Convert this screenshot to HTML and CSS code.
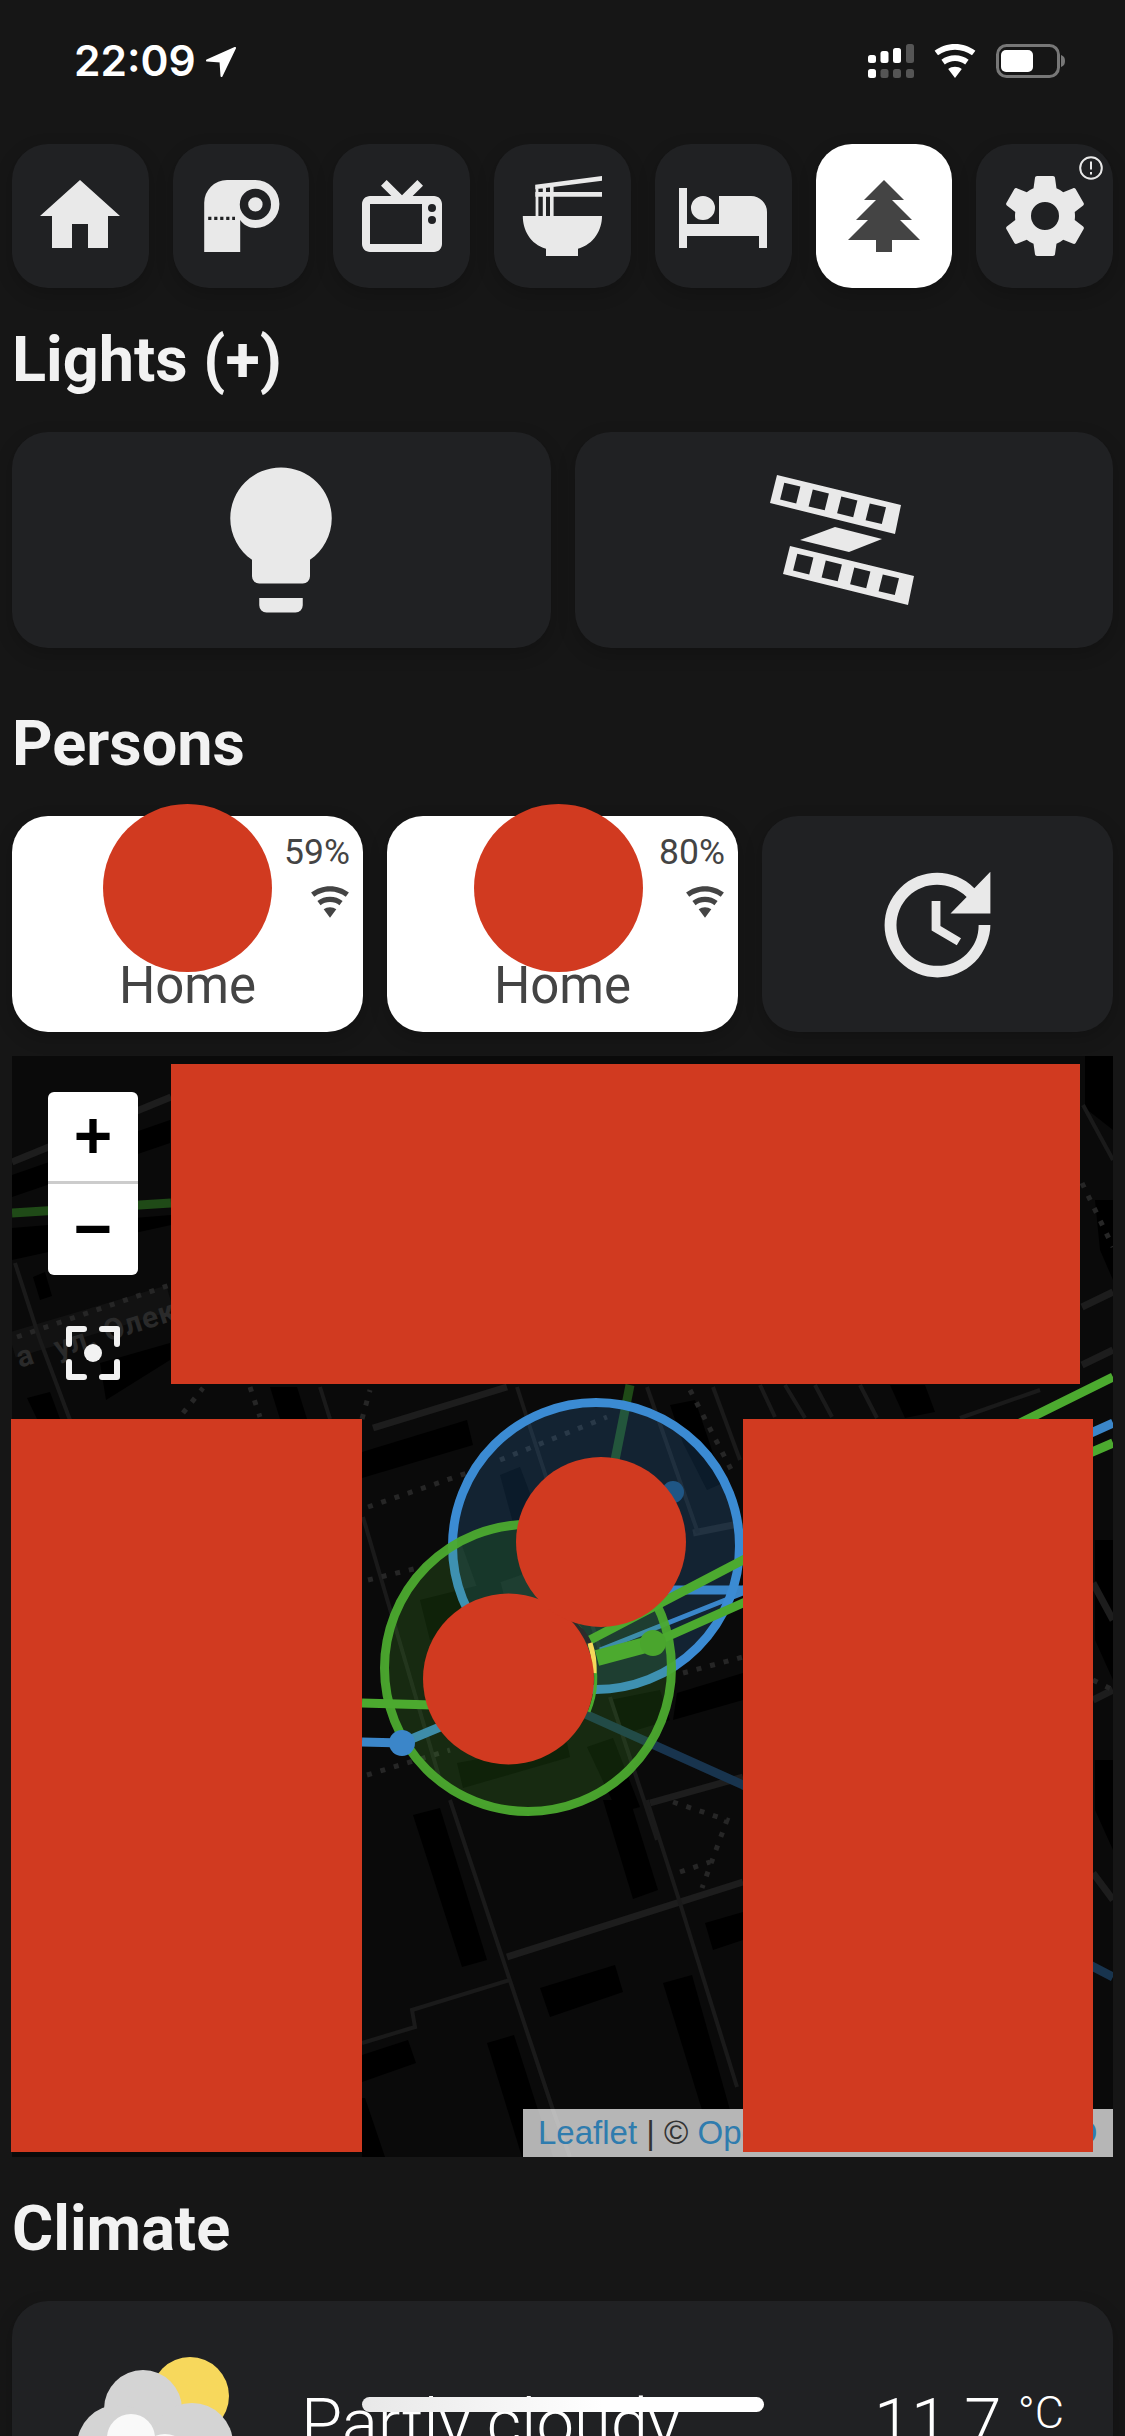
FILE: index.html
```html
<!DOCTYPE html>
<html>
<head>
    <title>Home Assistant</title>
    <link rel="stylesheet" href="styles.css">
</head>
<body>
    <header class="status-bar">
        <span class="time">22:09</span>
        <svg class="location" viewBox="0 0 30 30"><path d="M29,1L1,13.5L14.5,14.5L15.5,29Z"/></svg>
        <div class="status-right">
            <svg class="signal" viewBox="0 0 46 34">
                <rect class="on" x="0" y="11" width="8" height="8" rx="2.5"/>
                <rect class="on" x="12.5" y="7" width="8" height="12" rx="2.5"/>
                <rect class="on" x="25" y="4" width="8" height="15" rx="2.5"/>
                <rect class="off" x="38" y="0" width="8" height="19" rx="2.5"/>
                <rect class="on" x="0" y="25" width="8" height="9" rx="2.5"/>
                <rect class="off" x="12.5" y="25" width="8" height="9" rx="2.5"/>
                <rect class="off" x="25" y="25" width="8" height="9" rx="2.5"/>
                <rect class="off" x="38" y="25" width="8" height="9" rx="2.5"/>
            </svg>
            <svg class="status-wifi" viewBox="1.2 3 21.6 18"><path d="M12,21L15.6,16.2C14.6,15.45 13.35,15 12,15C10.65,15 9.4,15.45 8.4,16.2L12,21M12,3C7.95,3 4.21,4.34 1.2,6.6L3,9C5.5,7.12 8.62,6 12,6C15.38,6 18.5,7.12 21,9L22.8,6.6C19.79,4.34 16.05,3 12,3M12,9C9.3,9 6.81,9.89 4.8,11.4L6.6,13.8C8.1,12.67 9.97,12 12,12C14.03,12 15.9,12.67 17.4,13.8L19.2,11.4C17.19,9.89 14.7,9 12,9Z"/></svg>
            <svg class="battery" viewBox="0 0 70 34">
                <rect class="battery-case" x="1.5" y="1.5" width="61" height="31" rx="9"/>
                <rect class="battery-level" x="5" y="6" width="32" height="22" rx="5"/>
                <path class="battery-nub" d="M65,11C68,12 69,14 69,17C69,20 68,22 65,23Z"/>
            </svg>
        </div>
    </header>

    <main class="page">
        <nav class="tabs">
            <div class="tab">
                <svg class="icon-tab" viewBox="0 0 24 24"><path d="M10,20V14H14V20H19V12H22L12,3L2,12H5V20H10Z"/></svg>
            </div>
            <div class="tab">
                <svg class="icon-tab" viewBox="0 0 24 24">
                    <path fill-rule="evenodd" d="M8.5,3H15.6A6,6 0 0 1 15.6,15C14,15 12.6,14.2 11.8,13V21H2.8V8.7A5.7,5.7 0 0 1 8.5,3ZM15.6,5.2A3.9,3.9 0 1 0 15.6,13A3.9,3.9 0 1 0 15.6,5.2ZM15.6,7.3A1.8,1.8 0 1 1 15.6,10.9A1.8,1.8 0 1 1 15.6,7.3Z"/>
                    <path class="tab-dots" d="M3.8,12.6H10.5"/>
                </svg>
            </div>
            <div class="tab">
                <svg class="icon-tab" viewBox="0 0 24 24"><path d="M8.16,3L6.75,4.41L9.34,7H4C2.89,7 2,7.89 2,9V19C2,20.11 2.89,21 4,21H20C21.11,21 22,20.11 22,19V9C22,7.89 21.11,7 20,7H14.66L17.25,4.41L15.84,3L12,6.84L8.16,3M4,9H17V19H4V9M19.5,9A1,1 0 0,1 20.5,10A1,1 0 0,1 19.5,11A1,1 0 0,1 18.5,10A1,1 0 0,1 19.5,9M19.5,12A1,1 0 0,1 20.5,13A1,1 0 0,1 19.5,14A1,1 0 0,1 18.5,13A1,1 0 0,1 19.5,12Z"/></svg>
            </div>
            <div class="tab">
                <svg class="icon-tab" viewBox="0 0 24 24"><path d="M5.3,4.2L22,2V3.2L5.3,5.3ZM5.3,6H22V7.2H5.3ZM5.4,4.5H6.1V12H5.4ZM7.2,4.5H8V12H7.2ZM9,4.5H9.9V12H9ZM2.2,12H22C22,15.5 20,19 16,20.2V22H8V20.2C4,19 2.2,15.5 2.2,12Z"/></svg>
            </div>
            <div class="tab">
                <svg class="icon-tab" viewBox="0 0 24 24"><path d="M19,7H11V14H3V5H1V20H3V17H21V20H23V11A4,4 0 0,0 19,7M7,13A3,3 0 0,0 10,10A3,3 0 0,0 7,7A3,3 0 0,0 4,10A3,3 0 0,0 7,13Z"/></svg>
            </div>
            <div class="tab tab-active">
                <svg class="icon-tab" viewBox="0 0 24 24"><path d="M10,21V18H3L8,13H5L10,8H7L12,3L17,8H14L19,13H16L21,18H14V21H10Z"/></svg>
            </div>
            <div class="tab">
                <svg class="icon-tab" viewBox="0 0 24 24"><path d="M12,15.5A3.5,3.5 0 0,1 8.5,12A3.5,3.5 0 0,1 12,8.5A3.5,3.5 0 0,1 15.5,12A3.5,3.5 0 0,1 12,15.5M19.43,12.97C19.47,12.65 19.5,12.33 19.5,12C19.5,11.67 19.47,11.34 19.43,11L21.54,9.37C21.73,9.22 21.78,8.95 21.66,8.73L19.66,5.27C19.54,5.05 19.27,4.96 19.05,5.05L16.56,6.05C16.04,5.66 15.5,5.32 14.87,5.07L14.5,2.42C14.46,2.18 14.25,2 14,2H10C9.75,2 9.54,2.18 9.5,2.42L9.13,5.07C8.5,5.32 7.96,5.66 7.44,6.05L4.95,5.05C4.73,4.96 4.46,5.05 4.34,5.27L2.34,8.73C2.21,8.95 2.27,9.22 2.46,9.37L4.57,11C4.53,11.34 4.5,11.67 4.5,12C4.5,12.33 4.53,12.65 4.57,12.97L2.46,14.63C2.27,14.78 2.21,15.05 2.34,15.27L4.34,18.73C4.46,18.95 4.73,19.03 4.95,18.95L7.44,17.94C7.96,18.34 8.5,18.68 9.13,18.93L9.5,21.58C9.54,21.82 9.75,22 10,22H14C14.25,22 14.46,21.82 14.5,21.58L14.87,18.93C15.5,18.67 16.04,18.34 16.56,17.94L19.05,18.95C19.27,19.03 19.54,18.95 19.66,18.73L21.66,15.27C21.78,15.05 21.73,14.78 21.54,14.63L19.43,12.97Z"/></svg>
                <svg class="tab-badge" viewBox="0 0 24 24"><circle cx="12" cy="12" r="10.8"/><path d="M12,5.5V13.5M12,16V18.5"/></svg>
            </div>
        </nav>

        <h2 class="section-title">Lights (+)</h2>
        <div class="row-two">
            <div class="card">
                <svg class="icon-bulb" viewBox="0 0 24 24"><path d="M12,2A7,7 0 0,0 5,9C5,11.38 6.19,13.47 8,14.74V17A1,1 0 0,0 9,18H15A1,1 0 0,0 16,17V14.74C17.81,13.47 19,11.38 19,9A7,7 0 0,0 12,2M9,21A1,1 0 0,0 10,22H14A1,1 0 0,0 15,21V20H9V21Z"/></svg>
            </div>
            <div class="card">
                <svg class="icon-scene" viewBox="760 465 170 150">
                    <defs>
                        <path id="strip" fill-rule="evenodd" d="M778,475L902,505L896,534L771,503ZM785.3,482.7L781.1,499.5L797.2,503.4L801.4,486.6ZM813.8,489.6L809.6,506.4L825.7,510.3L829.9,493.5ZM842.3,496.5L838.1,513.3L854.2,517.2L858.4,500.4ZM870.8,503.4L866.6,520.2L882.8,524.1L887,507.3Z"/>
                    </defs>
                    <use href="#strip"/>
                    <path d="M836,527L883,539L850,552L801,540Z"/>
                    <use href="#strip" transform="translate(13 71)"/>
                </svg>
            </div>
        </div>

        <h2 class="section-title section-gap">Persons</h2>
        <div class="row-three">
            <div class="card person">
                <div class="avatar"></div>
                <div class="person-stats">
                    <span>59%</span>
                    <svg class="icon-wifi" viewBox="0 0 24 24"><path d="M12,21L15.6,16.2C14.6,15.45 13.35,15 12,15C10.65,15 9.4,15.45 8.4,16.2L12,21M12,3C7.95,3 4.21,4.34 1.2,6.6L3,9C5.5,7.12 8.62,6 12,6C15.38,6 18.5,7.12 21,9L22.8,6.6C19.79,4.34 16.05,3 12,3M12,9C9.3,9 6.81,9.89 4.8,11.4L6.6,13.8C8.1,12.67 9.97,12 12,12C14.03,12 15.9,12.67 17.4,13.8L19.2,11.4C17.19,9.89 14.7,9 12,9Z"/></svg>
                </div>
                <div class="person-state">Home</div>
            </div>
            <div class="card person">
                <div class="avatar avatar-off"></div>
                <div class="person-stats">
                    <span>80%</span>
                    <svg class="icon-wifi" viewBox="0 0 24 24"><path d="M12,21L15.6,16.2C14.6,15.45 13.35,15 12,15C10.65,15 9.4,15.45 8.4,16.2L12,21M12,3C7.95,3 4.21,4.34 1.2,6.6L3,9C5.5,7.12 8.62,6 12,6C15.38,6 18.5,7.12 21,9L22.8,6.6C19.79,4.34 16.05,3 12,3M12,9C9.3,9 6.81,9.89 4.8,11.4L6.6,13.8C8.1,12.67 9.97,12 12,12C14.03,12 15.9,12.67 17.4,13.8L19.2,11.4C17.19,9.89 14.7,9 12,9Z"/></svg>
                </div>
                <div class="person-state">Home</div>
            </div>
            <div class="card">
                <svg class="icon-update" viewBox="0 0 24 24"><path d="M21,10.12H14.22L16.96,7.3C14.23,4.6 9.81,4.5 7.08,7.2C4.35,9.91 4.35,14.28 7.08,17C9.81,19.7 14.23,19.7 16.96,17C18.32,15.65 19,14.08 19,12.1H21C21,14.08 20.12,16.65 18.36,18.39C14.85,21.87 9.15,21.87 5.64,18.39C2.14,14.92 2.11,9.28 5.62,5.81C9.13,2.34 14.76,2.34 18.27,5.81L21,3V10.12M12.5,8V12.25L16,14.33L15.28,15.54L11,13V8H12.5Z"/></svg>
            </div>
        </div>

        <div class="map">
            <!-- map drawn in page coordinates, so the viewBox starts at the map's corner -->
            <svg class="map-layer" viewBox="12 1056 1101 1101">
                <!-- buildings -->
                <path class="bld" d="M12,1175L170,1120V1143L12,1197ZM12,1228L171,1215V1225L12,1260ZM33,1277L45,1272L52,1296L40,1300ZM100,1363L170,1343V1360L106,1400ZM27,1398L50,1392L60,1419H37Z"/>
                <path class="bld" d="M270,1387H297L307,1419H280ZM890,1385H925L935,1412L905,1418ZM1085,1056H1113V1130L1085,1108Z"/>
                <path class="bld" d="M362,1452L467,1420L473,1445L362,1478ZM500,1475L520,1467L540,1520L515,1530ZM683,1443L707,1490L723,1483L695,1400L670,1405Z"/>
                <path class="bld" d="M677,1693L743,1673V1700L673,1720ZM587,1747L613,1738L640,1807L618,1813ZM457,1763L567,1743L570,1757L463,1788Z"/>
                <path class="bld" d="M413,1815L440,1808L487,1960L462,1967ZM603,1800H630L658,1890L633,1899ZM540,1988L615,1965L623,1992L550,2017ZM663,1983L692,1975L730,2110H702Z"/>
                <path class="bld" d="M487,2043L514,2035L553,2157H522ZM362,2055L408,2040L416,2063L362,2082ZM705,1923L743,1912V1940L713,1950ZM362,2098H365L385,2157H362Z"/>
                <path class="bld" d="M460,1540L520,1520L535,1570L478,1590ZM420,1600L500,1580L510,1620L430,1640ZM610,1700L660,1690L670,1720L620,1735Z"/>
                <path class="bld" d="M1095,1540H1113V1680L1095,1640ZM1095,1760H1113V1850L1095,1810ZM1095,1200H1113V1280L1100,1250Z"/>

                <!-- streets -->
                <g class="road">
                    <path d="M12,1162L171,1097"/>
                    <path d="M507,1387L373,1428"/>
                    <path d="M12,1345L170,1298" class="road-wide"/>
                    <path d="M1082,1307L1113,1292M1082,1365L1113,1350"/>
                    <path d="M693,1533L743,1523M650,1803L743,1777M507,1957L743,1882"/>
                    <path d="M1093,1583L1113,1620M1093,1873L1113,1900M1093,1700L1113,1690"/>
                </g>
                <g class="road-thin">
                    <path d="M15,1263L40,1340L70,1420"/>
                    <path d="M363,1517L407,1667L440,1780"/>
                    <path d="M517,1387L547,1480L600,1650"/>
                    <path d="M647,1387L698,1533"/>
                    <path d="M713,1387L740,1460"/>
                    <path d="M610,1697L657,1840"/>
                    <path d="M450,1800L553,2110L570,2157"/>
                    <path d="M647,1800L680,1903L737,2087"/>
                    <path d="M362,2043L415,2027L412,2010L510,1980"/>
                    <path d="M320,1387L330,1419M760,1385L775,1417M785,1385L805,1418M815,1385L832,1417M860,1385L877,1418"/>
                    <path d="M960,1418L1040,1390"/>
                    <path d="M1083,1105L1113,1160"/>
                </g>
                <g class="dots">
                    <path d="M17,1337L170,1285"/>
                    <path d="M183,1413L203,1388M250,1387L260,1417M362,1419L370,1390"/>
                    <path d="M368,1507L467,1473M500,1460L607,1417M690,1390L735,1477"/>
                    <path d="M683,1673L743,1657M367,1775L450,1750M368,1580L430,1565"/>
                    <path d="M673,1802L727,1820L702,1888M680,1872L710,1862"/>
                    <path d="M1082,1183L1113,1247M1093,1680L1113,1690"/>
                </g>
                <text class="map-label" transform="translate(20 1368) rotate(-18)">а</text>
                <text class="map-label" transform="translate(58 1358) rotate(-18)">ул. Олек</text>

                <!-- routes and zones -->
                <path class="route-dim-green" d="M12,1213L171,1203"/>
                <path class="route-dim-green" d="M630,1385L615,1460"/>
                <path class="route-dim-blue" d="M583,1713L743,1785L1113,1977"/>
                <circle class="dot-dim" cx="673" cy="1492" r="11"/>
                <path class="route-blue" d="M663,1590H743L1113,1423"/>
                <path class="route-blue route-thin" d="M600,1650L743,1593"/>
                <path class="route-blue" d="M362,1742L402,1743L440,1727"/>
                <circle class="zone-blue" cx="596" cy="1546" r="143.5"/>
                <circle class="zone-green" cx="528" cy="1668" r="143.5"/>
                <path class="route-green" d="M590,1640L743,1560L1113,1377"/>
                <path class="route-green" d="M362,1703L433,1705"/>
                <path class="route-green route-fat" d="M597,1658L653,1643"/>
                <path class="route-green" d="M653,1643L743,1603L1113,1443"/>
                <circle class="dot-green" cx="653" cy="1643" r="13"/>
                <circle class="dot-blue" cx="402" cy="1743" r="13"/>

                <!-- markers -->
                <path class="marker-rim" d="M559,1607A88,88 0 0 1 589,1712"/>
                <path class="marker-dark" d="M568,1618Q585,1632 590,1645"/>
                <path class="marker-sun" d="M590,1643Q595,1658 594,1673"/>
                <circle class="redact-dot" cx="508.5" cy="1679" r="85.5"/>
                <circle class="redact-dot" cx="601" cy="1542" r="85"/>
            </svg>

            <div class="zoom-ctrl">
                <div class="zoom-btn zoom-in">+</div>
                <div class="zoom-btn">−</div>
            </div>
            <svg class="locate" viewBox="0 0 54 54">
                <path d="M3,18V3H18M36,3H51V18M51,36V51H36M18,51H3V36"/>
                <circle cx="27" cy="27" r="9"/>
            </svg>
            <div class="attribution"><a>Leaflet</a> | © <a>OpenStreetMap</a> © <a class="attr-last">CARTO</a></div>

            <div class="redact redact-top"></div>
            <div class="redact redact-left"></div>
            <div class="redact redact-right"></div>
        </div>

        <h2 class="section-title">Climate</h2>
        <div class="card weather">
            <svg class="weather-icon" viewBox="75 2357 160 130">
                <circle class="sun" cx="190" cy="2396" r="39"/>
                <circle class="cloud" cx="143" cy="2409" r="39"/>
                <circle class="cloud" cx="118" cy="2446" r="41"/>
                <circle class="cloud" cx="192" cy="2444" r="41"/>
                <circle class="cloud-front" cx="131" cy="2438" r="24"/>
                <circle class="cloud-front" cx="165" cy="2458" r="24"/>
            </svg>
            <div class="weather-state">Partly cloudy</div>
            <div class="weather-temp">11.7 <span class="weather-unit">°C</span></div>
        </div>
    </main>

    <div class="home-indicator"></div>
</body>
</html>
```

FILE: styles.css
```css
html, body {
    height: 2436px;
    overflow: hidden;
}

body {
    margin: 0;
    background-color: #161616;
    font-family: Roboto, "Noto Sans", sans-serif;
    position: relative;
}

/* status bar */
.status-bar {
    height: 144px;
    box-sizing: border-box;
    padding: 44px 59px 0 74px;
    display: flex;
    align-items: flex-start;
    color: #fff;
}

.time {
    font-family: Inter, sans-serif;
    font-size: 42.5px;
    font-weight: 600;
    line-height: 34px;
}

.location {
    width: 30px;
    height: 30px;
    margin: 3px 0 0 10px;
    fill: #fff;
    stroke: #fff;
    stroke-width: 2;
    stroke-linejoin: round;
}

.status-right {
    margin-left: auto;
    display: flex;
    gap: 20px;
}

.signal {
    width: 46px;
    height: 34px;
}

.signal .on {
    fill: #fff;
}

.signal .off {
    fill: #555;
}

.status-wifi {
    width: 42px;
    height: 34px;
    fill: #fff;
}

.battery {
    width: 70px;
    height: 34px;
}

.battery-case {
    fill: none;
    stroke: #777;
    stroke-width: 3;
}

.battery-level {
    fill: #fff;
}

.battery-nub {
    fill: #777;
}

.page {
    padding: 0 12px;
}

/* tabs */
.tabs {
    display: grid;
    grid-template-columns: repeat(7, 1fr);
    gap: 24px;
}

.tab {
    height: 144px;
    position: relative;
    display: flex;
    align-items: center;
    justify-content: center;
    background-color: #202123;
    border-radius: 36px;
    box-shadow: 0 6px 18px rgba(0, 0, 0, 0.2);
}

.tab-active {
    background-color: #fff;
}

.icon-tab {
    width: 96px;
    height: 96px;
    fill: #e9e9e9;
}

.tab-active .icon-tab {
    fill: #444;
}

.tab-dots {
    fill: none;
    stroke: #202123;
    stroke-width: 0.8;
    stroke-dasharray: 0.8 0.7;
}

.tab-badge {
    position: absolute;
    top: 12px;
    right: 10px;
    width: 24px;
    height: 24px;
    fill: none;
    stroke: #e9e9e9;
    stroke-width: 2;
}

.section-title {
    margin: 0;
    padding: 40px 0 41px 0;
    font-size: 63px;
    font-weight: 700;
    line-height: 63px;
    color: #f2f2f2;
}

.section-gap {
    margin-top: 24px;
}

.card {
    display: flex;
    align-items: center;
    justify-content: center;
    background-color: #202123;
    border-radius: 36px;
    box-shadow: 0 6px 18px rgba(0, 0, 0, 0.2);
}

.row-two {
    height: 216px;
    display: grid;
    grid-template-columns: 1fr 1fr;
    gap: 24px;
}

.row-three {
    height: 216px;
    display: grid;
    grid-template-columns: 1fr 1fr 1fr;
    gap: 24px;
}

.icon-bulb {
    width: 174px;
    height: 174px;
    fill: #e9e9e9;
}

.icon-scene {
    width: 170px;
    height: 150px;
    fill: #e9e9e9;
}

.icon-update {
    width: 141px;
    height: 141px;
    fill: #e9e9e9;
}

/* persons */
.person {
    position: relative;
    flex-direction: column;
    justify-content: flex-start;
    background-color: #fff;
    color: #444;
}

.avatar {
    width: 169px;
    height: 168px;
    margin-top: -12px;
    background-color: #d13a20;
    border-radius: 50%;
}

.avatar-off {
    margin-right: 9px;
}

.person-state {
    margin-top: -12px;
    font-size: 51px;
    line-height: 51px;
    position: relative;
}

.person-stats {
    position: absolute;
    top: 19px;
    right: 13px;
    display: flex;
    flex-direction: column;
    align-items: flex-end;
    gap: 12px;
    font-size: 35.5px;
    line-height: 34px;
}

.icon-wifi {
    width: 42px;
    height: 42px;
    margin-right: -1px;
    fill: #444;
}

/* map */
.map {
    height: 1101px;
    margin-top: 24px;
    position: relative;
    background-color: #0a0a0a;
}

.map-layer {
    position: absolute;
    top: 0;
    left: 0;
    width: 1101px;
    height: 1101px;
}

.map-layer path,
.locate path {
    fill: none;
}

.map-layer .bld {
    fill: #000;
}

.road path {
    stroke: #1d1d1d;
    stroke-width: 7;
}

.road .road-wide {
    stroke: #121212;
    stroke-width: 26;
}

.road-thin path {
    stroke: #1a1a1a;
    stroke-width: 4;
}

.dots path {
    stroke: #262626;
    stroke-width: 5;
    stroke-dasharray: 5 9;
}

.map-label {
    font-size: 30px;
    font-weight: 700;
    letter-spacing: 1px;
    fill: #2a2a2a;
}

.route-dim-green {
    stroke: #1f4a17;
    stroke-width: 9;
}

.route-dim-blue {
    stroke: #18344e;
    stroke-width: 9;
}

.dot-dim {
    fill: #1a4a72;
}

.route-blue {
    stroke: #3b86c9;
    stroke-width: 9;
}

.route-thin {
    stroke-width: 5;
}

.route-green {
    stroke: #4caa2f;
    stroke-width: 9;
}

.route-fat {
    stroke-width: 16;
}

.zone-blue {
    fill: rgba(56, 136, 208, 0.2);
    stroke: #3b8bd3;
    stroke-width: 9;
}

.zone-green {
    fill: rgba(76, 170, 47, 0.2);
    stroke: rgba(76, 170, 47, 0.95);
    stroke-width: 9;
}

.dot-green {
    fill: #4aa52d;
}

.dot-blue {
    fill: #3b86c9;
}

.marker-rim {
    stroke: #4caa2f;
    stroke-width: 3;
}

.marker-dark {
    stroke: #2c2c2c;
    stroke-width: 5;
}

.marker-sun {
    stroke: #f6d85a;
    stroke-width: 5;
}

.redact-dot {
    fill: #d13a20;
}

.zoom-ctrl {
    position: absolute;
    top: 36px;
    left: 36px;
    width: 90px;
    background-color: #fff;
    border-radius: 6px;
}

.zoom-btn {
    height: 91px;
    box-sizing: border-box;
    padding-top: 7px;
    display: flex;
    align-items: center;
    justify-content: center;
    font-family: "Liberation Mono", monospace;
    font-size: 66px;
    font-weight: 700;
    color: #000;
}

.zoom-in {
    border-bottom: 3px solid #ccc;
    height: 92px;
}

.locate {
    position: absolute;
    top: 270px;
    left: 54px;
    width: 54px;
    height: 54px;
    stroke: #f2f2f2;
    stroke-width: 6;
    stroke-linejoin: round;
    stroke-linecap: round;
    fill: #f2f2f2;
}

.locate circle {
    stroke: none;
}

.attribution {
    position: absolute;
    right: 0;
    bottom: 0;
    width: 590px;
    height: 48px;
    box-sizing: border-box;
    padding: 0 15px;
    font-family: "Liberation Sans", sans-serif;
    font-size: 33px;
    line-height: 48px;
    white-space: nowrap;
    color: #333;
    background-color: rgba(255, 255, 255, 0.7);
}

.attribution a {
    color: #2f7cae;
}

.attribution .attr-last {
    margin-left: 10px;
}

.redact {
    position: absolute;
    background-color: #d13a20;
}

.redact-top {
    top: 8px;
    left: 159px;
    width: 909px;
    height: 320px;
}

.redact-left {
    top: 363px;
    left: -1px;
    width: 351px;
    height: 733px;
}

.redact-right {
    top: 363px;
    left: 731px;
    width: 350px;
    height: 733px;
}

/* weather */
.weather {
    height: 260px;
    box-sizing: border-box;
    padding: 56px 49px 0 63px;
    justify-content: flex-start;
    align-items: flex-start;
    color: #fff;
    font-weight: 300;
    font-size: 67px;
    line-height: 66px;
}

.weather-icon {
    width: 160px;
    height: 130px;
    flex-shrink: 0;
}

.sun {
    fill: #f7d85c;
}

.cloud {
    fill: #d4d4d4;
}

.cloud-front {
    fill: #f9f9f9;
}

.weather-state {
    margin: 33px 0 0 66px;
}

.weather-temp {
    margin: 33px 0 0 auto;
    white-space: nowrap;
}

.weather-unit {
    font-size: 45px;
    vertical-align: top;
    line-height: 45px;
}

.home-indicator {
    position: absolute;
    left: 362px;
    top: 2397px;
    width: 402px;
    height: 15px;
    border-radius: 8px;
    background: linear-gradient(90deg, #e8e8e8, #fff 60%);
}
```
